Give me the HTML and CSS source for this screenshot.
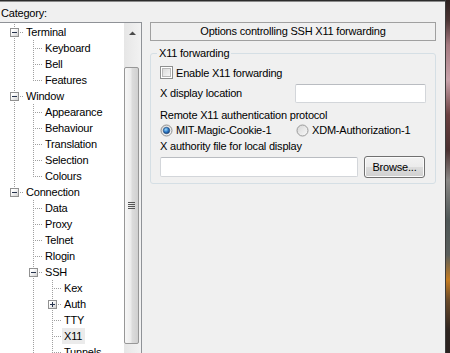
FILE: index.html
```html
<!DOCTYPE html>
<html lang="en">
<head>
    <meta charset="UTF-8">
    <title>PuTTY Configuration - X11</title>
    <link rel="stylesheet" href="styles.css">
</head>
<body>

<div class="screen">
    <div class="window">
        <div class="frame-top"></div>

        <div class="dialog">
            <!-- Left side: category tree -->
            <div class="category">
                <div class="cat-label">Category:</div>
                <div class="tree">
                    <div class="tree-items">
                        <div class="row"><span class="g t"><span class="exp"></span></span><span class="name">Terminal</span></div>
                        <div class="row"><span class="g v"></span><span class="g t"></span><span class="name">Keyboard</span></div>
                        <div class="row"><span class="g v"></span><span class="g t"></span><span class="name">Bell</span></div>
                        <div class="row"><span class="g v"></span><span class="g l"></span><span class="name">Features</span></div>
                        <div class="row"><span class="g t"><span class="exp"></span></span><span class="name">Window</span></div>
                        <div class="row"><span class="g v"></span><span class="g t"></span><span class="name">Appearance</span></div>
                        <div class="row"><span class="g v"></span><span class="g t"></span><span class="name">Behaviour</span></div>
                        <div class="row"><span class="g v"></span><span class="g t"></span><span class="name">Translation</span></div>
                        <div class="row"><span class="g v"></span><span class="g t"></span><span class="name">Selection</span></div>
                        <div class="row"><span class="g v"></span><span class="g l"></span><span class="name">Colours</span></div>
                        <div class="row"><span class="g l"><span class="exp"></span></span><span class="name">Connection</span></div>
                        <div class="row"><span class="g"></span><span class="g t"></span><span class="name">Data</span></div>
                        <div class="row"><span class="g"></span><span class="g t"></span><span class="name">Proxy</span></div>
                        <div class="row"><span class="g"></span><span class="g t"></span><span class="name">Telnet</span></div>
                        <div class="row"><span class="g"></span><span class="g t"></span><span class="name">Rlogin</span></div>
                        <div class="row"><span class="g"></span><span class="g t"><span class="exp"></span></span><span class="name">SSH</span></div>
                        <div class="row"><span class="g"></span><span class="g v"></span><span class="g t"></span><span class="name">Kex</span></div>
                        <div class="row"><span class="g"></span><span class="g v"></span><span class="g t"><span class="exp plus"></span></span><span class="name">Auth</span></div>
                        <div class="row"><span class="g"></span><span class="g v"></span><span class="g t"></span><span class="name">TTY</span></div>
                        <div class="row"><span class="g"></span><span class="g v"></span><span class="g t"></span><span class="name sel">X11</span></div>
                        <div class="row"><span class="g"></span><span class="g v"></span><span class="g t"></span><span class="name">Tunnels</span></div>
                    </div>
                    <div class="scrollbar">
                        <div class="sb-up">
                            <svg width="7" height="4" viewBox="0 0 7 4"><path d="M0 4L3.5 0.5L7 4z" fill="#4a4a4a"/></svg>
                        </div>
                        <div class="sb-thumb"><span class="grip"></span></div>
                    </div>
                </div>
            </div>

            <!-- Right side: options panel -->
            <div class="panel">
                <div class="panel-title">Options controlling SSH X11 forwarding</div>

                <fieldset class="group">
                    <legend>X11 forwarding</legend>

                    <div class="check-row">
                        <svg class="box" width="13" height="13" viewBox="0 0 13 13">
                            <defs>
                                <linearGradient id="chkFill" x1="0" y1="0" x2="1" y2="1">
                                    <stop offset="0" stop-color="#d9d9d9"/>
                                    <stop offset="1" stop-color="#f8f8f8"/>
                                </linearGradient>
                                <radialGradient id="dotFill" cx="0.4" cy="0.35" r="0.7">
                                    <stop offset="0" stop-color="#9fdcfb"/>
                                    <stop offset="0.55" stop-color="#2c79c7"/>
                                    <stop offset="1" stop-color="#153f78"/>
                                </radialGradient>
                                <linearGradient id="radFill" x1="0" y1="0" x2="1" y2="1">
                                    <stop offset="0" stop-color="#d6d6d6"/>
                                    <stop offset="1" stop-color="#fafafa"/>
                                </linearGradient>
                            </defs>
                            <rect x="0.5" y="0.5" width="12" height="12" fill="#fff" stroke="#8e8f8f"/>
                            <rect x="2.5" y="2.5" width="8" height="8" fill="url(#chkFill)" stroke="#b8b8b8"/>
                        </svg>
                        <span class="lbl">Enable X11 forwarding</span>
                    </div>

                    <div class="field-row">
                        <span class="lbl">X display location</span>
                        <input class="text short" type="text">
                    </div>

                    <div class="text-row">Remote X11 authentication protocol</div>

                    <div class="radio-row">
                        <div class="radio-opt first">
                            <svg width="13" height="13" viewBox="0 0 13 13">
                                <circle cx="6.5" cy="6.5" r="5.5" fill="url(#radFill)" stroke="#8e8f8f"/>
                                <circle cx="6.5" cy="6.5" r="3.2" fill="url(#dotFill)" stroke="#1a3f6e" stroke-width="0.6"/>
                            </svg>
                            <span class="lbl">MIT-Magic-Cookie-1</span>
                        </div>
                        <div class="radio-opt">
                            <svg width="13" height="13" viewBox="0 0 13 13">
                                <circle cx="6.5" cy="6.5" r="5.5" fill="url(#radFill)" stroke="#9a9a9a"/>
                            </svg>
                            <span class="lbl">XDM-Authorization-1</span>
                        </div>
                    </div>

                    <div class="text-row">X authority file for local display</div>

                    <div class="browse-row">
                        <input class="text wide" type="text">
                        <button class="btn" type="button">Browse...</button>
                    </div>
                </fieldset>
            </div>
        </div>
    </div>
    <div class="desktop"></div>
</div>

</body>
</html>
```

FILE: styles.css
```css
body {
    margin: 0;
    font-family: "Liberation Sans", Arial, sans-serif;
    font-size: 11px;
    letter-spacing: -0.2px;
    color: #000;
    background: #f0f0f0;
}

.screen {
    display: flex;
    height: 353px;
    overflow: hidden;
}

.window {
    width: 445px;
    border-right: 1px solid #3c3c3c;
    display: flex;
    flex-direction: column;
    background: #f0f0f0;
}

.frame-top {
    height: 1px;
    border-bottom: 1px solid #8a8a8a;
    background: #2c2c2c;
    flex: none;
}

.desktop {
    flex: 1;
    background: linear-gradient(to bottom, #2d2220 0, #4a3434 20px, #a47a80 45px, #c8a2aa 80px,
        #6a4040 115px, #4a3030 150px, #8a8886 180px, #4e5656 220px, #5a5e5c 255px,
        #c47c22 280px, #6a4a2a 300px, #2e2420 330px, #2a2220 353px);
}

.dialog {
    display: flex;
    flex: 1;
}

/* ---- category tree ---- */
.category {
    width: 142px;
    flex: none;
}

.cat-label {
    height: 15px;
    padding: 5px 0 0 1px;
    line-height: 13px;
}

.tree {
    margin-left: -1px;
    height: 340px;
    border: 1px solid #8f9297;
    background: #fff;
    display: flex;
    overflow: hidden;
}

.tree-items {
    flex: 1;
    padding: 1px 0 0 5px;
}

.row {
    display: flex;
    height: 16px;
    --dv: repeating-linear-gradient(to bottom, #a0a0a0 0 1px, transparent 1px 2px);
    --dh: repeating-linear-gradient(to right, #a0a0a0 0 1px, transparent 1px 2px);
}

.g {
    width: 19px;
    height: 16px;
    flex: none;
}

.g.v {
    background: var(--dv) 9px 0 / 1px 16px no-repeat;
}

.g.t {
    background: var(--dh) 9px 8px / 10px 1px no-repeat, var(--dv) 9px 0 / 1px 16px no-repeat;
}

.g.l {
    background: var(--dh) 9px 8px / 10px 1px no-repeat, var(--dv) 9px 0 / 1px 9px no-repeat;
}

.exp {
    display: block;
    width: 7px;
    height: 7px;
    margin: 4px 0 0 5px;
    border: 1px solid #919191;
    background:
        linear-gradient(#27344d, #27344d) 1px 3px / 5px 1px no-repeat,
        linear-gradient(135deg, #fff 25%, #d2d2d2);
}

.exp.plus {
    background:
        linear-gradient(#27344d, #27344d) 1px 3px / 5px 1px no-repeat,
        linear-gradient(#27344d, #27344d) 3px 1px / 1px 5px no-repeat,
        linear-gradient(135deg, #fff 25%, #d2d2d2);
}

.name {
    padding: 0 2px;
    line-height: 16px;
    white-space: nowrap;
}

.name.sel {
    background: #ebebeb;
    padding-right: 3px;
}

/* scrollbar */
.scrollbar {
    width: 17px;
    flex: none;
    background: linear-gradient(to right, #e6e6e6, #f2f2f2);
    display: flex;
    flex-direction: column;
}

.sb-up {
    height: 17px;
    display: flex;
    justify-content: center;
    padding-top: 8px;
    box-sizing: border-box;
}

.sb-up svg {
    display: block;
}

.sb-thumb {
    margin: 27px 2px 0 0;
    height: 275px;
    border: 1px solid #979797;
    border-radius: 2px;
    background: linear-gradient(to right, #f6f6f6, #ececec 45%, #dcdcdc 55%, #d0d0d0);
    display: flex;
    align-items: center;
    justify-content: center;
}

.grip {
    width: 7px;
    height: 7px;
    background: repeating-linear-gradient(to bottom, #555 0 1px, transparent 1px 2px);
}

/* ---- options panel ---- */
.panel {
    width: 286px;
    margin: 20px 0 0 8px;
    flex: none;
}

.panel-title {
    height: 17px;
    border: 1px solid #a0a0a0;
    line-height: 17px;
    text-align: center;
}

.group {
    margin: 6px 0 0;
    padding: 6px 9px 5px;
    min-width: 0;
    border: 1px solid #d5dfe5;
    border-radius: 3px;
}

.group legend {
    margin-left: -3px;
    padding: 0 2px;
    line-height: 13px;
}

.lbl {
    line-height: 13px;
    white-space: nowrap;
}

.check-row {
    display: flex;
    align-items: flex-start;
    gap: 3px;
}

.check-row svg,
.radio-opt svg {
    display: block;
    flex: none;
}

.check-row .lbl {
    padding-top: 1px;
}

.field-row {
    display: flex;
    align-items: center;
    margin-top: 4px;
}

.text {
    box-sizing: border-box;
    height: 20px;
    border: 1px solid #d3d6da;
    border-top-color: #b9bcc1;
    border-radius: 2px;
    background: #fff;
    padding: 0 3px;
    font: inherit;
}

.text.short {
    width: 131px;
    height: 19px;
    margin-left: auto;
}

.text.wide {
    width: 198px;
}

.text-row {
    line-height: 13px;
    margin-top: 6px;
}

.radio-row {
    display: flex;
    margin-top: 2px;
}

.radio-opt {
    display: flex;
    gap: 3px;
}

.radio-opt.first {
    width: 136px;
}

.radio-row + .text-row {
    margin-top: 3px;
}

.browse-row {
    display: flex;
    align-items: center;
    gap: 6px;
    margin-top: 3px;
}

.btn {
    width: 61px;
    height: 22px;
    padding: 0;
    border: 1px solid #707070;
    border-radius: 3px;
    background: linear-gradient(#f2f2f2 0, #ebebeb 50%, #dddddd 50%, #cfcfcf 100%);
    box-shadow: inset 0 0 0 1px #fbfbfb;
    font: inherit;
    letter-spacing: inherit;
    color: #000;
}
```
